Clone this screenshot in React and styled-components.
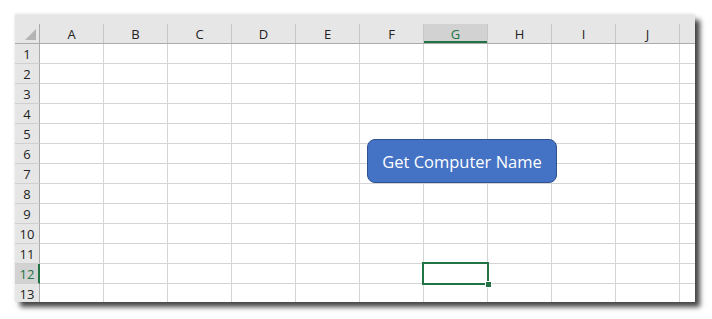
import React from 'react';
import styled, {createGlobalStyle} from 'styled-components';

const GlobalStyle = createGlobalStyle`
  html, body {
    margin: 0;
    padding: 0;
    background: #ffffff;
  }
  body {
    font-family: "Open Sans", "DejaVu Sans", sans-serif;
  }
`

// K is only partly in view, so its letter stays off screen
const columns = ['A', 'B', 'C', 'D', 'E', 'F', 'G', 'H', 'I', 'J', 'K']
const visibleLabels = columns.length - 1
const rows = Array.from({length: 13}, (_, i) => i + 1)
const selectedCol = 'G'
const selectedRow = 12

const Page = styled.div`
  width: 712px;
  height: 319px;
  padding: 15px 0 0 15px;
  box-sizing: border-box;
`

const Sheet = styled.div`
  position: relative;
  width: 680px;
  height: 287px;
  background: #ffffff;
  box-shadow: 0 -1px 3px rgba(0, 0, 0, 0.12), 5px 5px 5px rgba(0, 0, 0, 0.72);
`

const Viewport = styled.div`
  width: 100%;
  height: 100%;
  overflow: hidden;
`

const Grid = styled.div`
  display: grid;
  grid-template-columns: 25px repeat(${columns.length}, 64px);
  grid-template-rows: 29px repeat(${rows.length}, 20px);
`

const HeaderCell = styled.div`
  display: flex;
  align-items: flex-end;
  background: #e6e6e6;
  border-bottom: 1px solid #ababab;
  box-sizing: border-box;
`

const HeaderLabel = styled.div`
  flex: 1;
  height: 19px;
  display: flex;
  align-items: center;
  justify-content: center;
  box-sizing: border-box;
  border-right: 1px solid ${p => (p.$corner ? '#ababab' : '#c6c6c6')};
  background: ${p => (p.$selected ? '#d2d2d2' : 'transparent')};
  box-shadow: ${p => (p.$selected ? 'inset 0 -2px 0 #217346' : 'none')};
  color: ${p => (p.$selected ? '#217346' : '#222222')};
  font-size: 13px;
  padding-top: 1px;
`

const CornerLabel = styled(HeaderLabel)`
  justify-content: flex-end;
  align-items: flex-end;
  padding: 0 3px 3px 0;
`

const Triangle = styled.div`
  width: 0;
  height: 0;
  border-left: 11px solid transparent;
  border-bottom: 11px solid #b4b4b4;
`

const RowHeader = styled.div`
  display: flex;
  align-items: center;
  justify-content: center;
  box-sizing: border-box;
  background: ${p => (p.$selected ? '#d2d2d2' : '#e6e6e6')};
  border-bottom: 1px solid #d0d0d0;
  border-right: ${p => (p.$selected ? '2px solid #217346' : '1px solid #ababab')};
  color: ${p => (p.$selected ? '#217346' : '#222222')};
  font-size: 13px;
  padding-left: ${p => (p.$selected ? '1px' : '0')};
`

const Cell = styled.div`
  box-sizing: border-box;
  border-right: 1px solid #d4d4d4;
  border-bottom: 1px solid #d4d4d4;
`

const ActiveCell = styled.div`
  position: absolute;
  left: 407px;
  top: 247px;
  width: 67px;
  height: 23px;
  box-sizing: border-box;
  border: 2px solid #217346;
`

const FillHandle = styled.div`
  position: absolute;
  right: -5px;
  bottom: -5px;
  width: 5px;
  height: 5px;
  background: #217346;
  border: 1px solid #ffffff;
`

const ShapeButton = styled.button`
  position: absolute;
  left: 352px;
  top: 124px;
  width: 190px;
  height: 44px;
  box-sizing: border-box;
  background: #4472c4;
  border: 1px solid #2f528f;
  border-radius: 8px;
  color: #ffffff;
  font-family: "Open Sans", "DejaVu Sans", sans-serif;
  font-size: 16.5px;
  padding: 0;
  cursor: pointer;
`

const App = () => {
    return (
        <>
            <GlobalStyle/>
            <Page>
                <Sheet>
                    <Viewport>
                        <Grid>
                            <HeaderCell>
                                <CornerLabel $corner>
                                    <Triangle/>
                                </CornerLabel>
                            </HeaderCell>
                            {columns.map((col, i) => (
                                <HeaderCell key={col}>
                                    <HeaderLabel $selected={col === selectedCol}>
                                        {i < visibleLabels ? col : ''}
                                    </HeaderLabel>
                                </HeaderCell>
                            ))}
                            {rows.map(row => (
                                <React.Fragment key={row}>
                                    <RowHeader $selected={row === selectedRow}>{row}</RowHeader>
                                    {columns.map(col => <Cell key={col + row}/>)}
                                </React.Fragment>
                            ))}
                        </Grid>
                    </Viewport>
                    <ShapeButton>Get Computer Name</ShapeButton>
                    <ActiveCell>
                        <FillHandle/>
                    </ActiveCell>
                </Sheet>
            </Page>
        </>
    );
};

export default App;
